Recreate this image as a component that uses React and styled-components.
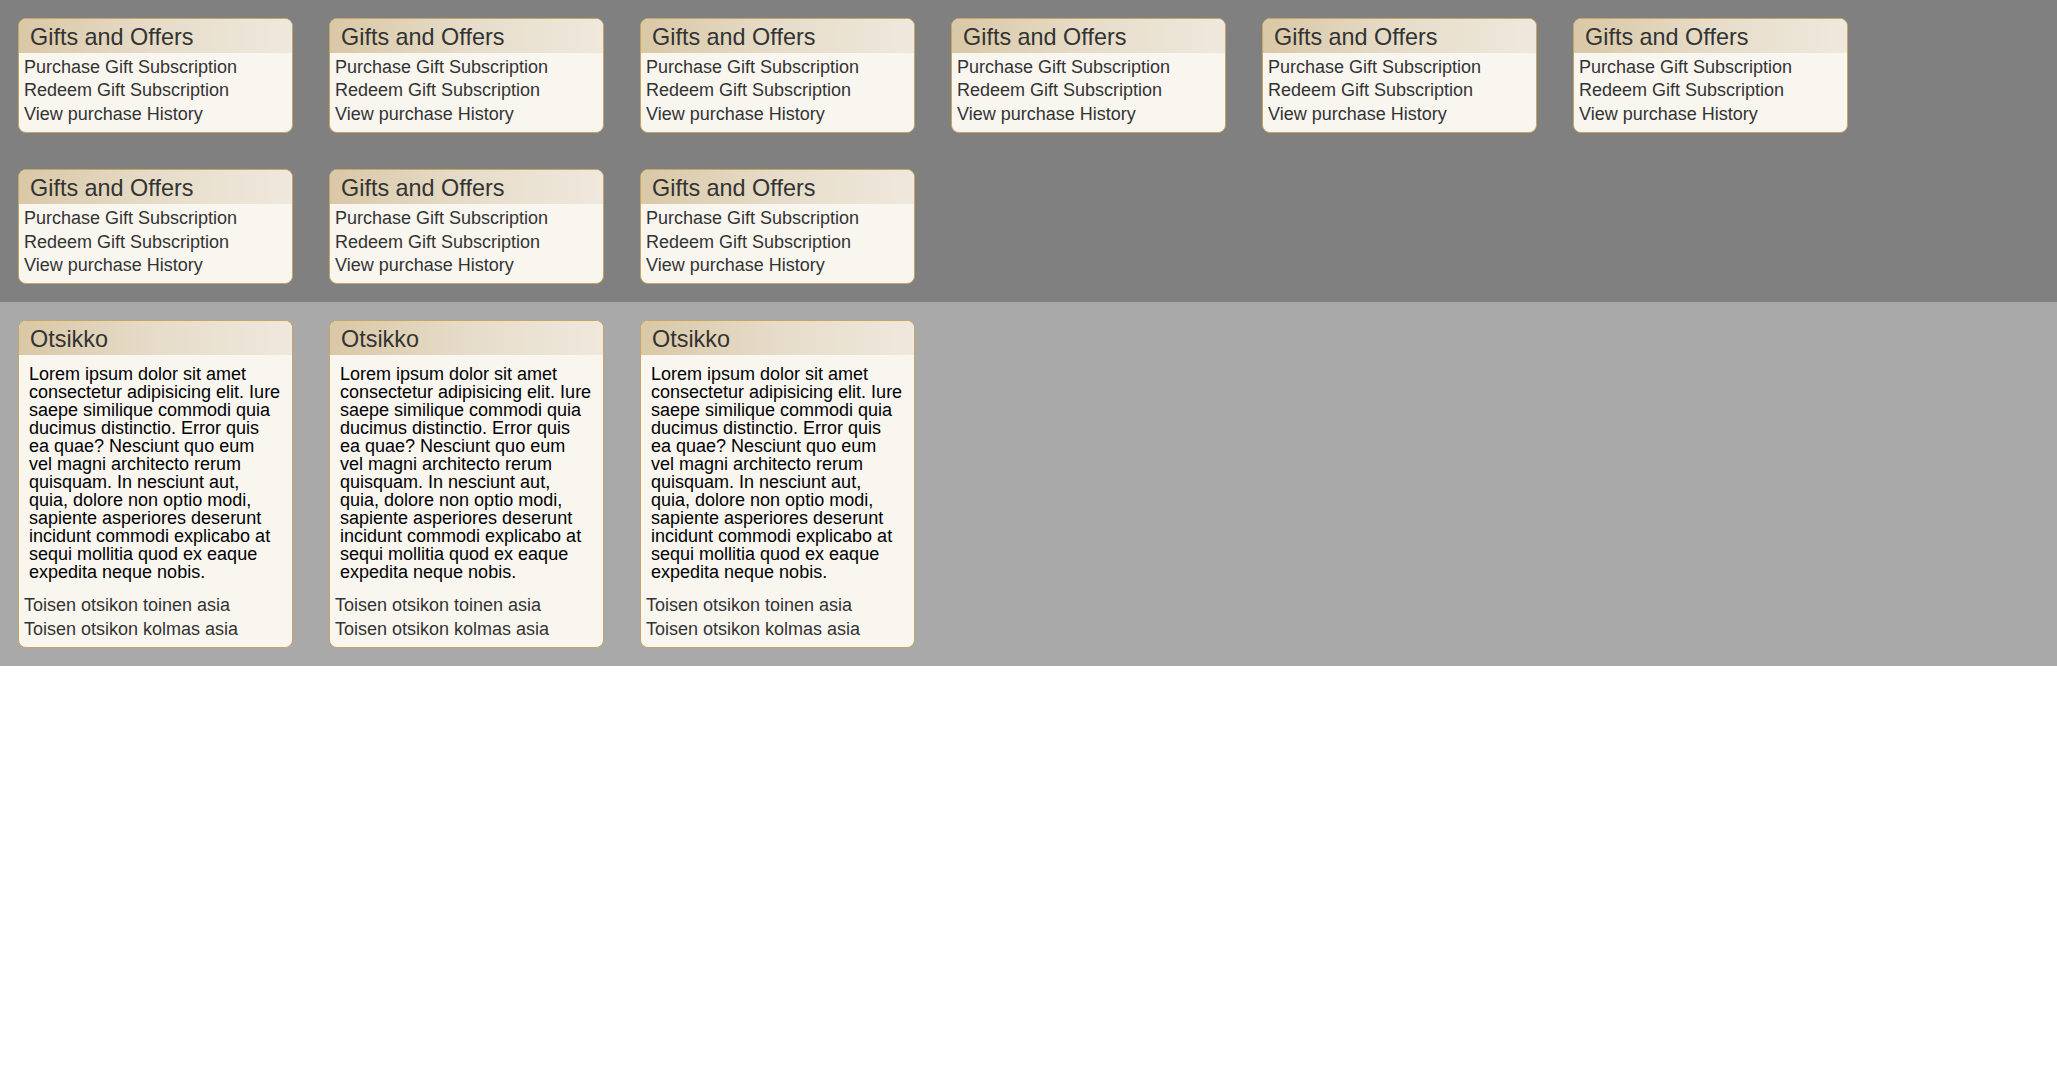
import React from 'react'
import styled, { createGlobalStyle } from 'styled-components'

const GlobalStyle = createGlobalStyle`
  body {
    margin: 0;
    font-family: "Liberation Sans", Arial, sans-serif;
    font-size: 18px;
    background: #fff;
  }
  * {
    box-sizing: border-box;
  }
`

const Section = styled.section`
  display: flex;
  flex-wrap: wrap;
  align-items: flex-start;
  column-gap: 36px;
  row-gap: 36px;
  padding: 18px;
  background: ${props => props.$bg};
`

const Box = styled.div`
  width: 275px;
  border: 1px solid #c6a562;
  border-radius: 8px;
  background: #f9f6f0;
  overflow: hidden;
`

const Title = styled.h3`
  margin: 0;
  padding: 5px 11px 2px;
  font-size: 23.4px;
  font-weight: normal;
  line-height: normal;
  color: #333;
  background: linear-gradient(to right, #d9c8a6, #e6dcc9 50%, #efe8dc);
`

const Body = styled.div`
  padding: 3px 5px 6px;
`

const Text = styled.p`
  margin: 7px 6px 13px 5px;
  font-size: 18px;
  line-height: 18px;
  color: #000;
`

const Links = styled.ul`
  list-style: none;
  margin: 0;
  padding: 0;
`

const LinkItem = styled.li`
  font-size: 18px;
  line-height: 23.4px;
  color: #333;
  white-space: nowrap;
`

const lorem =
  'Lorem ipsum dolor sit amet consectetur adipisicing elit. Iure saepe similique commodi quia ducimus distinctio. Error quis ea quae? Nesciunt quo eum vel magni architecto rerum quisquam. In nesciunt aut, quia, dolore non optio modi, sapiente asperiores deserunt incidunt commodi explicabo at sequi mollitia quod ex eaque expedita neque nobis.'

const giftLinks = ['Purchase Gift Subscription', 'Redeem Gift Subscription', 'View purchase History']
const otherLinks = ['Toisen otsikon toinen asia', 'Toisen otsikon kolmas asia']

function GiftBox() {
  return (
    <Box>
      <Title>Gifts and Offers</Title>
      <Body>
        <Links>
          {giftLinks.map(l => (
            <LinkItem key={l}>{l}</LinkItem>
          ))}
        </Links>
      </Body>
    </Box>
  )
}

function TextBox() {
  return (
    <Box>
      <Title>Otsikko</Title>
      <Body>
        <Text>{lorem}</Text>
        <Links>
          {otherLinks.map(l => (
            <LinkItem key={l}>{l}</LinkItem>
          ))}
        </Links>
      </Body>
    </Box>
  )
}

function App() {
  return (
    <>
      <GlobalStyle />
      <Section $bg="#808080">
        {Array.from({ length: 9 }).map((_, i) => (
          <GiftBox key={i} />
        ))}
      </Section>
      <Section $bg="#a9a9a9">
        {Array.from({ length: 3 }).map((_, i) => (
          <TextBox key={i} />
        ))}
      </Section>
    </>
  )
}

export default App
